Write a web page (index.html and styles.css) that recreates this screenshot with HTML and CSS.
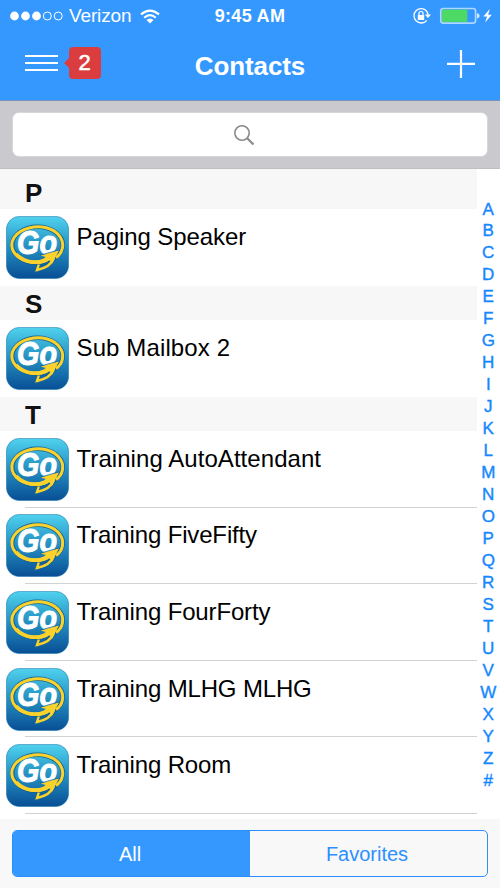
FILE: index.html
```
<!DOCTYPE html>
<html lang="en">
<head>
<meta charset="utf-8">
<title>Contacts</title>
<link rel="stylesheet" href="styles.css">
</head>
<body>
<svg class="defs" width="0" height="0" aria-hidden="true">
  <defs>
    <linearGradient id="sky" x1="0" y1="0" x2="0" y2="1"><stop offset="0" stop-color="#50d2ee"/><stop offset=".45" stop-color="#2795c5"/><stop offset="1" stop-color="#084e95"/></linearGradient>
    <symbol id="go" viewBox="0 0 63 63">
      <rect x=".4" y=".4" width="62.2" height="62.2" rx="13" fill="url(#sky)" stroke="#1c78ae" stroke-width=".6"/>
      <ellipse cx="31.5" cy="29" rx="25.3" ry="18.2" fill="none" stroke="#136399" stroke-width="4.4"/>
      <path d="M50 41.5C57 37 58.5 28 54.5 21.5C49 12 35 9 23 12C9 15.5 2.5 26 7.5 35.5C12.5 44.5 27 49.5 41 44" fill="none" stroke="#fbd22b" stroke-width="3"/>
      <path d="M10 38C19 47 33 49 43 42" fill="none" stroke="#fbd22b" stroke-width="3.4"/>
      <path d="M32.8 48.5L31 54C38 52.5 45 50 48 42" fill="none" stroke="#136399" stroke-width="4.4"/>
      <path d="M32.8 48.5L31 54C38 52.5 45 50 48 42" fill="none" stroke="#fbd22b" stroke-width="2.4"/>
      <text class="go-text" x="11" y="38.2" textLength="40" lengthAdjust="spacingAndGlyphs">Go</text>
      <path d="M34.5 39.5L53 34.2L46.2 47.5L43.2 44.2C38 48 31 48.7 25 47.2L26 44.4C33 45 37 43.4 39.8 41Z" fill="#fbd22b"/>
      <path d="M34 39.3L53.3 33.8" stroke="#136399" stroke-width=".8"/>
    </symbol>
  </defs>
</svg>
<header class="top">
  <div class="status">
    <div class="carrier">
      <svg width="54" height="12" viewBox="0 0 54 12"><g fill="#fff"><circle cx="4.5" cy="6" r="4.4"/><circle cx="15.5" cy="6" r="4.4"/><circle cx="26.5" cy="6" r="4.4"/></g><g fill="none" stroke="#fff"><circle cx="37.3" cy="6" r="4"/><circle cx="48.2" cy="6" r="4"/></g></svg>
      <span class="network">Verizon</span>
      <svg class="wifi" width="20" height="15" viewBox="0 0 20 15"><g fill="none" stroke="#fff" stroke-width="2.1"><path d="M1 5.4Q10-2.3 19 5.4"/><path d="M4.2 8.8Q10 3.6 15.8 8.8"/></g><path d="M6.5 11Q10 8 13.5 11L10 14.5Z" fill="#fff"/></svg>
    </div>
    <time class="clock">9:45 AM</time>
    <div class="power">
      <svg width="82" height="18" viewBox="0 0 82 18"><path d="M15.8 4.3A7.2 7.2 0 1 0 15.8 13.3M15.1 3.5A7.2 7.2 0 0 1 17 9" fill="none" stroke="#fff" stroke-width="1.3"/><path d="M13.8 7.5H20L17 11Z" fill="#fff"/><rect x="6.8" y="8" width="6.4" height="5" rx=".5" fill="#fff"/><path d="M8 8.3V6.3Q8 4.5 10 4.5Q12 4.5 12 6.3V8.3" fill="none" stroke="#fff" stroke-width="1.2"/><rect x="29.8" y="1.5" width="34.8" height="14.6" rx="2.6" fill="none" stroke="#acd7ff" stroke-width="1.7"/><rect x="31" y="2.7" width="25.3" height="12.2" fill="#4cd964"/><path d="M66 6.3Q68.5 6.3 68.5 8.8Q68.5 11.3 66 11.3Z" fill="#d4eaff"/><path d="M78.8 2L72.4 9.6H76L74.1 15.6L80.8 7.8H77.1Z" fill="#fff"/></svg>
    </div>
  </div>
  <div class="nav">
    <div class="menu">
      <svg width="34" height="18" viewBox="0 0 34 18"><path d="M0 2H33M0 9H33M0 16H33" stroke="#fff" stroke-width="2"/></svg>
      <span class="badge">2</span>
    </div>
    <h1 class="title">Contacts</h1>
    <svg class="add" width="28" height="28" viewBox="0 0 28 28"><path d="M0 13.8H28M14 0V28" stroke="#fff" stroke-width="2.2"/></svg>
  </div>
</header>
<div class="search"><div class="field"><svg width="22" height="22" viewBox="0 0 22 22"><circle cx="9" cy="9" r="7.2" fill="none" stroke="#8a8a8e" stroke-width="1.6"/><path d="M14 14L20.5 20.5" stroke="#8a8a8e" stroke-width="2.2"/></svg></div></div>
<main class="content">
  <div class="list">
    <h2 class="section first">P</h2>
    <div class="row last"><svg class="avatar"><use href="#go"/></svg><span class="name paging">Paging Speaker</span></div>
    <h2 class="section">S</h2>
    <div class="row last"><svg class="avatar"><use href="#go"/></svg><span class="name mailbox">Sub Mailbox 2</span></div>
    <h2 class="section">T</h2>
    <div class="row"><svg class="avatar"><use href="#go"/></svg><span class="name">Training AutoAttendant</span></div>
    <div class="row"><svg class="avatar"><use href="#go"/></svg><span class="name tight">Training FiveFifty</span></div>
    <div class="row"><svg class="avatar"><use href="#go"/></svg><span class="name tight">Training FourForty</span></div>
    <div class="row"><svg class="avatar"><use href="#go"/></svg><span class="name tight">Training MLHG MLHG</span></div>
    <div class="row"><svg class="avatar"><use href="#go"/></svg><span class="name tight">Training Room</span></div>
  </div>
  <nav class="index"><span>A</span><span>B</span><span>C</span><span>D</span><span>E</span><span>F</span><span>G</span><span>H</span><span>I</span><span>J</span><span>K</span><span>L</span><span>M</span><span>N</span><span>O</span><span>P</span><span>Q</span><span>R</span><span>S</span><span>T</span><span>U</span><span>V</span><span>W</span><span>X</span><span>Y</span><span>Z</span><span>#</span></nav>
</main>
<footer class="bottom"><div class="tabs"><div class="tab active">All</div><div class="tab">Favorites</div></div></footer>
</body>
</html>
```
FILE: styles.css
```
* { box-sizing: border-box; }
body { margin: 0; width: 500px; height: 888px; overflow: hidden; display: flex; flex-direction: column; background: #fff; font-family: "Liberation Sans", Arial, sans-serif; color: #000; }
svg { display: block; flex: none; }
.defs { position: absolute; }
.top { height: 101px; flex: none; background: #3498ff; border-bottom: 1px solid #7195bd; color: #fff; }
.status { height: 32px; display: grid; grid-template-columns: 1fr auto 1fr; align-items: center; padding: 0 10px; }
.carrier { display: flex; align-items: center; }
.network { font-size: 19px; line-height: 24px; margin-left: 5px; letter-spacing: -.15px; }
.wifi { margin-left: 9px; }
.clock { font-size: 18px; font-weight: bold; line-height: 24px; letter-spacing: .3px; }
.power { display: flex; justify-content: flex-end; margin-right: -3px; }
.nav { height: 68px; display: grid; grid-template-columns: 1fr auto 1fr; align-items: start; padding: 0 25px; }
.menu { display: flex; align-items: center; padding-top: 15px; gap: 10px; }
.badge { position: relative; width: 32px; height: 32px; border-radius: 4px; background: #db3d3f; font-size: 22px; line-height: 32px; padding-right: 1px; text-align: center; -webkit-text-stroke: .5px #fff; }
.badge::before { content: ""; position: absolute; left: -5px; top: 10px; border: solid transparent; border-width: 6px 6px 6px 0; border-right-color: #db3d3f; }
.title { margin: 18px 0 0; font-size: 26px; line-height: 32px; letter-spacing: -.1px; }
.add { justify-self: end; margin-top: 18px; }
.search { height: 68px; flex: none; background: #c9c9ce; border-bottom: 1px solid #bfbfc3; padding: 11px 12px 0; }
.field { height: 45px; border-radius: 7px; background: #fff; border: 1px solid #d7d7db; display: flex; align-items: center; justify-content: center; padding-right: 12px; }
.content { height: 650px; flex: none; display: flex; overflow: hidden; }
.list { width: 476.5px; }
.section { margin: 0; height: 34.3px; background: #f7f7f7; padding-left: 25px; font-size: 26px; line-height: 36px; color: #111; }
.section.first { height: 40.3px; line-height: 48px; }
.row { height: 76.65px; display: flex; align-items: flex-start; padding: 6.5px 0 0 6px; gap: 8px; background: linear-gradient(#d2d2d4, #d2d2d4) 25px 100% / 100% 1.3px no-repeat; }
.row.last { background: none; }
.avatar { width: 63px; height: 63px; }
.go-text { font: italic bold 33px "Liberation Sans", Arial, sans-serif; fill: #fff; stroke: #fff; stroke-width: 1px; }
.name { font-size: 24px; line-height: 30px; margin: 6px 0 0 -.5px; white-space: nowrap; letter-spacing: .06px; }
.paging { letter-spacing: -.08px; }
.mailbox { letter-spacing: .12px; }
.tight { letter-spacing: -.15px; }
.index { flex: 1; padding-top: 29.5px; display: grid; grid-auto-rows: 21.97px; justify-items: center; align-content: start; font-size: 17px; line-height: 22px; color: #1688ff; -webkit-text-stroke: .4px #1688ff; }
.bottom { flex: 1; background: #f8f8f8; padding: 11px 12px; }
.tabs { height: 47px; display: grid; grid-template-columns: 1fr 1fr; border: 1.5px solid #2b8fff; border-radius: 5px; overflow: hidden; }
.tab { font-size: 20px; line-height: 46px; text-align: center; color: #2b8fff; padding-right: 3px; }
.active { background: #3498ff; color: #fff; }
```
